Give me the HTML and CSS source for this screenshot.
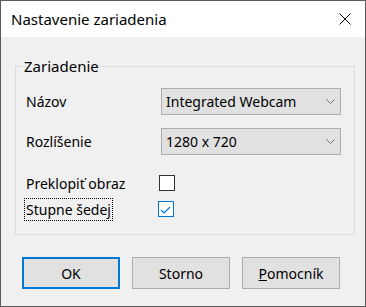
FILE: index.html
```html
<!DOCTYPE html>
<html lang="sk">
<head>
    <meta charset="UTF-8">
    <title>Nastavenie zariadenia</title>
    <link rel="stylesheet" href="styles.css">
</head>
<body>
    <div class="window">
        <div class="titlebar">
            <span class="title">Nastavenie zariadenia</span>
            <svg class="close" width="12" height="12" viewBox="0 0 12 12">
                <path d="M0.5 0.5 L11.5 11.5 M11.5 0.5 L0.5 11.5" stroke="#000" stroke-width="1" fill="none"/>
            </svg>
        </div>
        <div class="content">
            <fieldset class="group">
                <legend>Zariadenie</legend>
                <div class="row row-combo">
                    <span class="label">Názov</span>
                    <div class="combo">
                        <span>Integrated Webcam</span>
                        <svg width="9" height="5" viewBox="0 0 9 5"><path d="M0.5 0.5 L4.5 4.5 L8.5 0.5" stroke="#707070" fill="none"/></svg>
                    </div>
                </div>
                <div class="row row-combo second">
                    <span class="label">Rozlíšenie</span>
                    <div class="combo">
                        <span>1280 x 720</span>
                        <svg width="9" height="5" viewBox="0 0 9 5"><path d="M0.5 0.5 L4.5 4.5 L8.5 0.5" stroke="#707070" fill="none"/></svg>
                    </div>
                </div>
                <div class="row row-check third">
                    <span class="label">Preklopiť obraz</span>
                    <span class="checkbox"></span>
                </div>
                <div class="row row-check fourth">
                    <span class="label focused">Stupne šedej</span>
                    <span class="checkbox checked">
                        <svg width="14" height="14" viewBox="0 0 14 14"><path d="M2 8 L5 11 L11 5" stroke="#0078d7" stroke-width="1.2" fill="none"/></svg>
                    </span>
                </div>
            </fieldset>
            <div class="buttons">
                <button class="btn default">OK</button>
                <button class="btn">Storno</button>
                <button class="btn"><u>P</u>omocník</button>
            </div>
        </div>
    </div>
</body>
</html>
```

FILE: styles.css
```css
body {
    margin: 0;
    font-family: "Noto Sans", "Liberation Sans", sans-serif;
    font-size: 14px;
    color: #000;
}
.window {
    width: 366px;
    height: 307px;
    box-sizing: border-box;
    border: 1px solid #5a5a5a;
    background: #f0f0f0;
}
.titlebar {
    height: 36px;
    background: #fff;
    display: flex;
    align-items: center;
    justify-content: space-between;
    padding: 0 14px 0 10px;
}
.title {
    font-size: 15px;
}
.content {
    padding: 19px 10px 0 14px;
}
.group {
    margin: 0;
    border: 1px solid #dcdcdc;
    padding: 12px 0 14px 10px;
}
.group legend {
    margin-left: -4px;
    padding: 0 2px;
    line-height: 20px;
    font-size: 15px;
}
.row {
    display: flex;
    align-items: center;
}
.label {
    width: 135px;
}
.row-combo {
    height: 27px;
}
.second {
    margin-top: 13px;
}
.row-check {
    height: 22px;
}
.third {
    margin-top: 17px;
}
.fourth {
    margin-top: 4px;
}
.combo {
    width: 180px;
    height: 27px;
    box-sizing: border-box;
    border: 1px solid #adadad;
    background: #e1e1e1;
    display: flex;
    align-items: center;
    justify-content: space-between;
    padding: 0 5px 0 4px;
}
.checkbox {
    width: 16px;
    height: 16px;
    box-sizing: border-box;
    border: 1px solid #333;
    background: #fff;
    margin-left: -2px;
}
.checkbox.checked {
    border-color: #0078d7;
}
.checkbox svg {
    display: block;
}
.focused {
    width: auto;
    outline: 1px dotted #000;
    margin-left: -1px;
    padding: 0 1px;
    margin-right: 48px;
    line-height: 21px;
}
.buttons {
    display: flex;
    gap: 12px;
    margin-top: 22px;
    padding-left: 7px;
}
.btn {
    width: 98px;
    height: 32px;
    box-sizing: border-box;
    border: 1px solid #adadad;
    background: #e1e1e1;
    font-family: inherit;
    font-size: 14px;
    color: #000;
    padding: 0;
}
.btn.default {
    border: 2px solid #0078d7;
}
```
